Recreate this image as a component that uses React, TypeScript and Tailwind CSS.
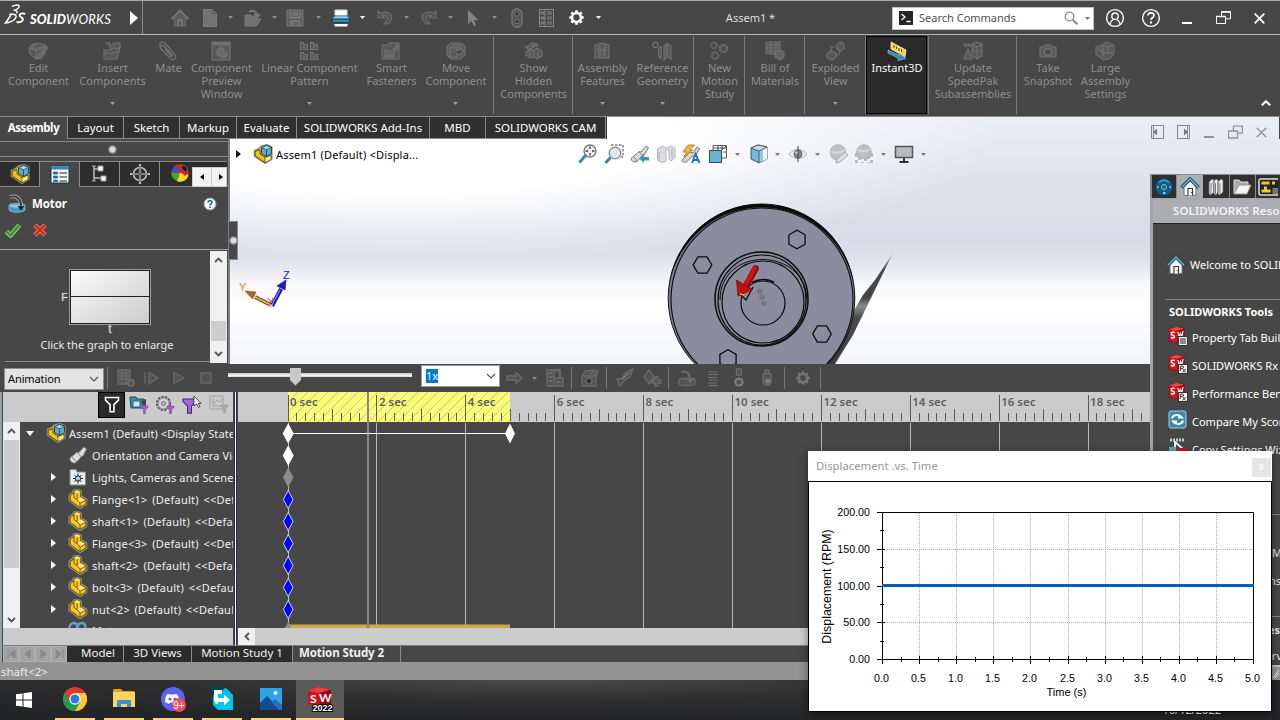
import React from "react";

type P = { className?: string };
const FONT = "font-['Noto_Sans','Open_Sans',sans-serif]";

const Svg = ({ w = 20, h = 20, vb, className = "", children }: { w?: number; h?: number; vb?: string; className?: string; children: React.ReactNode }) => (
  <svg width={w} height={h} viewBox={vb ?? "0 0 20 20"} className={"block shrink-0 " + className} fill="none">
    {children}
  </svg>
);

/* ---------- shared icons ---------- */
const Caret = ({ className = "" }: P) => (
  <Svg w={5} h={3} vb="0 0 5 3" className={className}><path d="M0 0H5L2.5 3Z" fill="currentColor" /></Svg>
);
const PartIcon = () => (
  <Svg>
    <path d="M1.5 6 5 3.5 6 1.5 10 .8 13 2.5V7l5.3 3.5v4.8L12 19.3 1.5 11.5Z" fill="#f7c524" stroke="#93917f" strokeWidth="2" />
    <path d="M2.2 6.2 6 4v-2l3.5-1 3.2 1.8V8l5.2 3v4L12 18.6 2.2 11.5Z" fill="#f7c524" stroke="#5e4603" strokeWidth=".9" />
    <path d="M6 2.2 9.4 1.2 12.5 3 9.2 4.3ZM9.4 10 12.7 8.2 17.6 11.2 12 14.2Z" fill="#ffe98a" />
    <path d="M6 4v4.5l3.3 2.2L12 14.2V18.5M9.2 4.3V10.5M12 14.2 17.8 11" stroke="#5e4603" strokeWidth=".8" />
  </Svg>
);
const AsmIcon = () => (
  <Svg>
    <path d="M1.5 6.5 5 5 8.5 2 14 .8 18.8 3v12L12 19.3 1.5 12Z" fill="#f7c524" stroke="#93917f" strokeWidth="1.6" />
    <path d="M2.2 7.5 7 5.5V10l5 3.2 6-2v4L12 18.6 2.2 11.8Z" fill="#f9c31b" stroke="#5e4603" strokeWidth=".9" />
    <path d="m8.5 3.8 5-2.4 5 2v6.2l-5 2.8-5-2.8Z" fill="#63a9ca" stroke="#123f58" strokeWidth=".9" />
    <path d="m8.5 3.8 5 2 5-2.4-5-2Z" fill="#a9d7ea" stroke="#123f58" strokeWidth=".7" />
    <path d="M13.5 5.8v6.4M12 13v5.5" stroke="#123f58" strokeWidth=".8" />
    <path d="M12.5 14.5 17.5 12v3.3l-5 2.7Z" fill="#fff08a" />
  </Svg>
);
const HouseIcon = () => (
  <Svg>
    <path d="M4 9v9.5h12V9l-6-5.5Z" fill="#f7f7f7" stroke="#777" />
    <path d="M8 18.5V11.5h4.5v7" stroke="#333" strokeWidth="1.1" fill="#fff" />
    <path d="M1.5 10.5 10 2l8.5 8.5" stroke="#123f58" strokeWidth="3.2" />
    <path d="M1.8 10.2 10 2l8.2 8.2" stroke="#6fc0de" strokeWidth="1.3" />
    <path d="M11.3 15v1" stroke="#333" />
  </Svg>
);
const SwIcon = ({ rx = false }: { rx?: boolean }) => (
  <Svg w={20} h={20}>
    <path d="M1 3.5 8 1l8 1.5v11.3L8 17 1 14.8Z" fill="#d9141c" stroke="#7b0a0e" strokeWidth=".7" />
    <path d="M1 3.5 9 4.8 16 2.5 8 1Z" fill="#f0494c" />
    <path d="M9 4.8 16 2.5v11.3L9 17Z" fill="#a50f15" />
    <path d="M6.8 6.7C4.8 5.5 2.8 6.4 3.2 8c.3 1.4 3.3 1.1 3.3 2.8 0 1.4-2.3 1.6-3.6.6" stroke="#fff" strokeWidth="1.4" />
    <path d="m10 6 1 5.5 1.5-4 1.2 3.5L15 5.2" stroke="#fff" strokeWidth="1.2" />
    <rect x="10.5" y="10.5" width="9" height="9" fill="#f4f4f4" stroke="#333" />
    {rx ? <path d="M12.3 17v-5h2c1.8 0 1.8 2.3 0 2.3h-2m2 0 3.3 4.2m0-3.6-3 3.6" stroke="#222" strokeWidth=".9" /> : <path d="M12 13h6M12 15h6M12 17h6" stroke="#222" />}
  </Svg>
);
const GearShape = ({ c, s = 18, sw = 2.4, className = "" }: { c: string; s?: number; sw?: number; className?: string }) => (
  <Svg w={s} h={s} className={className}>
    <circle cx="10" cy="10" r="5.2" stroke={c} strokeWidth={sw * 1.5} />
    <g stroke={c} strokeWidth="3.2">
      <path d="M10 1.5V5M10 15v3.5M1.5 10H5M15 10h3.5M4 4l2.4 2.4M13.6 13.6 16 16M16 4l-2.4 2.4M6.4 13.6 4 16" />
    </g>
  </Svg>
);

/* ---------- title bar ---------- */
const TG = "#6d6d6d";
function TitleBar() {
  return (
    <header className="flex h-[35px] shrink-0 border-y border-t-[#a7abab] border-b-[#b4b4b4] bg-[#474747]">
      <div className="flex w-[143px] items-center border-r border-[#8a8a8a] pl-[4px]">
        <Svg w={22} h={22} vb="0 0 22 22" className="-mt-[5px]">
          <path d="M8 2.5c4-2 8-2 7 .5-.7 1.700-3 2.800-5.500 3.400 3-.3 4.500.8 3 3" stroke="#fff" strokeWidth="1.4" />
          <path d="M8 9.500 1.500 19c5-.5 9.500-3 10.500-6 .7-2.500-2-3.300-7-2.500" stroke="#fff" strokeWidth="1.5" />
          <path d="M21.300 9.800c-3-.9-6-.2-5.500 1.900.5 1.700 3.400 2 3.100 4-.3 2-3.200 2.900-6.400 2.300" stroke="#fff" strokeWidth="1.9" />
        </Svg>
        <div className="ml-[4px] mt-[2px] flex w-[84px] items-baseline whitespace-nowrap font-['Lato','Noto_Sans',sans-serif] text-[13px] leading-[14px] text-white">
          <b className="font-black italic">SOLID</b><i className="tracking-[0.2px]">WORKS</i>
        </div>
        <Svg w={8} h={14} vb="0 0 8 14" className="ml-[16px]"><path d="M0 0 8 7 0 14Z" fill="#fff" /></Svg>
      </div>
      <div className="flex w-[480px] items-center pl-[27px] text-[#8f8f8f]">
        <Svg w={20} h={20}><path d="M10 2.5 2 11h2.5v7h11v-7H18Z" fill="#5d5d5d" stroke={TG} /><path d="m1.5 11 8.5-8.5L18.5 11" stroke="#7b7b7b" strokeWidth="1.6" /><path d="M8 18v-6h4v6" stroke="#888" /></Svg>
        <Svg w={14} h={18} vb="0 0 14 18" className="ml-[13px]"><path d="M.5.5h9l4 4v13H.5Z" fill="#727272" stroke="#7c7c7c" /><path d="M9.5.5v4h4" stroke="#555" /></Svg>
        <Caret className="ml-[11px]" />
        <Svg w={20} h={20} className="ml-[10px]"><path d="M2 18V7h6l1 2h5v2h4l-5 7Z" fill="#707070" stroke="#7c7c7c" /><path d="M6 4c5-3 8 0 8 4m-3-2 3 3 3-3" stroke="#7a7a7a" strokeWidth="2" /></Svg>
        <Caret className="ml-[9px]" />
        <Svg w={18} h={18} vb="0 0 18 18" className="ml-[9px]"><path d="M1 1h16v16H1Z" fill="#606060" stroke="#777" /><path d="M4 1.5v7h10v-7M5 17v-5h8v5M6 4h6M6 6h6M7 13v3" stroke="#858585" /></Svg>
        <Caret className="ml-[12px]" />
        <Svg w={20} h={20} className="ml-[10px]">
          <path d="M4 9V2h12v7" fill="#fff" stroke="#d9d9d9" /><path d="M1.5 9.5c0-1 1-1.5 2-1.5h13c1 0 2 .5 2 1.5V14h-17Z" fill="#4fb2d6" stroke="#0f4763" />
          <path d="M2 11.5h16" stroke="#12506e" strokeWidth="1.6" /><path d="M3 16h14l-1 2.5H4Z" fill="#fff" /><path d="M4 9h12" stroke="#bfe7f5" />
        </Svg>
        <Caret className="ml-[9px] text-white" />
        <Svg w={20} h={20} className="ml-[10px]"><path d="M3 3v7h7L7.500 7.500c4-1 6.500 1.500 4.500 4.500l-3 4h4c4-4 5.500-8 1.500-10.500C12 4 8.500 4 6 5.500Z" fill="#555" stroke={TG} strokeWidth="1.2" /></Svg>
        <Caret className="ml-[9px]" />
        <Svg w={20} h={20} className="ml-[10px] -scale-x-100"><path d="M3 3v7h7L7.500 7.500c4-1 6.500 1.500 4.500 4.500l-3 4h4c4-4 5.500-8 1.500-10.500C12 4 8.500 4 6 5.500Z" fill="#555" stroke={TG} strokeWidth="1.2" /></Svg>
        <Caret className="ml-[9px]" />
        <Svg w={12} h={18} vb="0 0 12 18" className="ml-[14px]"><path d="M1 1v14l3.5-3 2.5 5 2-1-2-5h4.500Z" fill="#828282" /></Svg>
        <Caret className="ml-[13px]" />
        <Svg w={12} h={20} vb="0 0 12 20" className="ml-[14px]"><rect x="1" y="1" width="10" height="18" rx="4.5" fill="#555" stroke="#777" strokeWidth="1.3" /><circle cx="6" cy="6" r="2.2" fill="#3b3b3b" stroke="#777" /><circle cx="6" cy="13.5" r="2.2" fill="#3b3b3b" stroke="#777" /></Svg>
        <Svg w={15} h={18} vb="0 0 15 18" className="ml-[16px]"><rect x=".5" y=".5" width="14" height="17" stroke="#898989" /><path d="M6 1v16M2 3h3v2H2ZM2 8h3v2H2ZM2 13h3v2H2ZM8 3h5M8 5h5M8 8h5M8 10h5M8 13h5M8 15h5" stroke="#898989" /></Svg>
        <GearShape c="#fff" s={17} className="ml-[14px]" sw={2} />
        <Caret className="ml-[11px] text-white" />
      </div>
      <div className="flex w-[253px] items-center justify-center pl-[2px] pt-px text-[11px] text-[#dedede]"><span>Assem1 *</span></div>
      <div className="flex items-center pl-[16px] pt-px">
        <div className="flex h-[23px] w-[202px] items-center border border-[#c2c2c2] bg-white pl-[6px]">
          <Svg w={14} h={14} vb="0 0 14 14"><path d="M0 0h14v14H0Z" fill="#262626" /><path d="m2.5 3 3.5 3L2.5 9M7.5 10.5h4" stroke="#fff" strokeWidth="1.3" /></Svg>
          <span className="ml-[6px] w-[146px] text-[11px] text-[#505050]">Search Commands</span>
          <Svg w={14} h={14} vb="0 0 14 14" className="-ml-[1px]"><circle cx="5.5" cy="5.5" r="4.3" stroke="#888" strokeWidth="1.3" /><path d="m8.8 8.8 4.5 4.5" stroke="#888" strokeWidth="2" /></Svg>
          <Caret className="ml-[7px] text-[#777]" />
        </div>
        <Svg w={20} h={20} className="ml-[11px]"><circle cx="10" cy="10" r="8.4" stroke="#fff" strokeWidth="1.4" /><circle cx="10" cy="8.2" r="3.2" stroke="#fff" strokeWidth="1.3" /><path d="M5 16c.3-2.5 1.8-3.8 3.2-4.5M15 16c-.3-2.5-1.8-3.8-3.2-4.5" stroke="#fff" strokeWidth="1.3" /></Svg>
        <Svg w={20} h={20} className="ml-[16px]"><circle cx="10" cy="10" r="8.4" stroke="#fff" strokeWidth="1.4" /><path d="M7 7.5C7 3.8 13 4 13 7.4c0 2.1-3 2.2-3 4.6" stroke="#fff" strokeWidth="1.8" /><path d="M9 13.5h2v2H9Z" fill="#fff" /></Svg>
        <Svg w={10} h={12} vb="0 0 10 12" className="ml-[21px]"><path d="M0 11h10" stroke="#fff" strokeWidth="2" /></Svg>
        <Svg w={15} h={14} vb="0 0 15 14" className="ml-[24px]"><path d="M.5 5.5h9v7h-9ZM5.5 5V.8h9v7H10" stroke="#fff" /><path d="M0 5.5h10M5 1h10" stroke="#fff" strokeWidth="1.6" /></Svg>
        <Svg w={11} h={11} vb="0 0 11 11" className="ml-[23px]"><path d="m.7.7 9.6 9.6M10.3.7.7 10.3" stroke="#fff" strokeWidth="1.7" /></Svg>
      </div>
    </header>
  );
}

/* ---------- ribbon ---------- */
const g1 = { stroke: "#727272", strokeWidth: 1.1, fill: "#585858" };
const ribbonIcons: Record<string, React.ReactNode> = {
  edit: <g {...g1}><path d="M1 7 5 3l5-1 7 2v8l-4 6-6-1-5-4Z" /><path d="M2 7l6 3 8-5M8 10v7M4 6l4-3M9 18l1-4 8-9 1.5 2-8 9.5Z" fill="#666" /></g>,
  insert: <g {...g1}><path d="M2 9h6l1-2h9l-3 11H2Z" /><path d="M3 2h5v5M9 5l3-3 6 0v4l-3 2-3-1M2 12h10l5-2" /></g>,
  mate: <g {...g1} fill="none" strokeWidth={1.4}><path d="M15 15 6 5c-2-2-5 1-3 3l10 10c3 2 6-1 4-4L7 2C4 0 1 2 2 5" /><path d="m7 8 7 8" /></g>,
  preview: <g {...g1}><path d="M1 1h18v18H1ZM1 4h18" /><path d="M1.5 2.5h17" stroke="#777" strokeWidth="2" /><path d="M6 9l4-3 3 2v3l3 1v3l-4 2-6-3Z" fill="#6a6a6a" /></g>,
  linear: <g {...g1}><path d="M1.5 1.5h3v2h4v5h-7ZM11.5 1.5h3v2h4v5h-7ZM1.5 11.5h3v2h4v5h-7ZM11.5 11.5h3v2h4v5h-7Z" /><path d="M4 6h2M14 6h2M4 16h2M14 16h2" stroke="#808080" /></g>,
  smart: <g {...g1}><path d="M1 4h6l1-2h10v16H1Z" /><path d="M4 8v8h9v-6M8 13l8-9 2 2-8 8-3 1Z" fill="#666" /></g>,
  move: <g {...g1}><path d="M1 6 5 2h10l4 3v9l-5 4H5l-4-4Z" /><path d="M4 7h7v9H4ZM4 7l4-3h7l-3 3" /><path d="M8 12c1-2 3-3 6-3V7l4 3.5-4 3V12" fill="#474747" /></g>,
  show: <g {...g1}><path d="M5 6c2-5 7-5 10-2l-2 1C11 3.5 9 4 8.5 6H11l-5 3-4-4Z" /><path d="M3 11l4-3 3 2 4-3 5 3v5l-5 3-3-2-4 1-4-3Z" /><path d="M7 10v6M11 11v6M15 10v6" /></g>,
  feat: <g {...g1}><path d="M3 4l7-2 7 2v13h-4v-8H7v8H3Z" /><path d="M7 4v5M13 4v5M3 8h4M8 9h4v8H8Z" /></g>,
  ref: <g {...g1} fill="none"><circle cx="3.5" cy="4" r="2.6" /><path d="M6.5 7.5 9 5.5v12l-2.5-2ZM12 5l2-2v14l-2 2ZM15.5 3 19 5v13l-3.5-2Z" fill="#555" /></g>,
  study: <g stroke="#6d6d6d" fill="none" strokeWidth="2"><circle cx="5" cy="4.5" r="2.8" strokeDasharray="1.6 .7" /><circle cx="14.5" cy="7.5" r="3.6" strokeDasharray="2.2 .6" strokeWidth="2.5" /><circle cx="6" cy="14.5" r="3.2" strokeDasharray="2 .7" /></g>,
  bom: <g {...g1}><path d="M1 1h14v12H1ZM1 4h14M1 7h14M1 10h14M6 1v12M11 1v12" /><path d="M10 11l5-2 4 2v5l-4 3-5-3Z" fill="#646464" /></g>,
  explode: <g {...g1}><path d="M2 13l4-3 5 2v4l-4 3-5-2ZM12 3l4-2 3 2v5l-4 2-3-2Z" /><path d="M10 14c3 0 5 0 5-5M6 10V6h4" fill="none" /></g>,
  instant: <g><path d="m4 1 15 8-1 7L4 8Z" fill="#fbd54a" stroke="#e9e9e9" strokeWidth=".8" /><path d="M7 4v3M9.5 5.5v2.5M12 7v3M14.5 8.2v3" stroke="#333" strokeWidth=".9" /><path d="m1 9 11 5.5V12l7 5.5-8 2V17L1 12Z" fill="#2b8fc0" stroke="#c9d8df" strokeWidth=".5" /></g>,
  update: <g {...g1}><path d="M9 3l5-2 5 2v12l-5 3-5-3ZM9 3l5 3 5-3M14 6v12M9 9l5 2 5-2" /><path d="M1 3h6v2H1ZM5 8l4 10H1Z" /></g>,
  snap: <g {...g1}><path d="M2 6h3l2-2h6l2 2h3v10H2Z" /><circle cx="10" cy="11" r="3.6" strokeWidth="1.8" fill="#474747" /></g>,
  large: <g {...g1}><path d="M1 6l6-2 5-3 7 3v9l-5 5-6 1-7-6Z" /><path d="M8 4l5 2 5-2M13 6v6M8 5v6l5 2 5-2M3 8l5 3v5" /></g>,
};
type Rb = { w: string; icon: string; lines: string[]; arrow?: boolean; sep?: boolean; on?: boolean };
const ribbon: Rb[] = [
  { w: "w-[76px]", icon: "edit", lines: ["Edit", "Component"] },
  { w: "w-[72px]", icon: "insert", lines: ["Insert", "Components"], arrow: true },
  { w: "w-[40px]", icon: "mate", lines: ["Mate"] },
  { w: "w-[66px]", icon: "preview", lines: ["Component", "Preview", "Window"] },
  { w: "w-[110px]", icon: "linear", lines: ["Linear Component", "Pattern"], arrow: true },
  { w: "w-[54px]", icon: "smart", lines: ["Smart", "Fasteners"] },
  { w: "w-[76px]", icon: "move", lines: ["Move", "Component"], arrow: true, sep: true },
  { w: "w-[79px]", icon: "show", lines: ["Show", "Hidden", "Components"], sep: true },
  { w: "w-[58px]", icon: "feat", lines: ["Assembly", "Features"], arrow: true },
  { w: "w-[63px]", icon: "ref", lines: ["Reference", "Geometry"], arrow: true, sep: true },
  { w: "w-[51px]", icon: "study", lines: ["New", "Motion", "Study"], sep: true },
  { w: "w-[60px]", icon: "bom", lines: ["Bill of", "Materials"], sep: true },
  { w: "w-[61px]", icon: "explode", lines: ["Exploded", "View"], arrow: true, sep: true },
  { w: "w-[63px]", icon: "instant", lines: ["Instant3D"], on: true, sep: true },
  { w: "w-[88px]", icon: "update", lines: ["Update", "SpeedPak", "Subassemblies"], sep: true },
  { w: "w-[61px]", icon: "snap", lines: ["Take", "Snapshot"] },
  { w: "w-[54px]", icon: "large", lines: ["Large", "Assembly", "Settings"] },
];
function Ribbon() {
  return (
    <section className="flex h-[82px] shrink-0 border-b border-[#8b8b8b] bg-[#474747] pt-px">
      {ribbon.map((r, i) => (
        <div key={i} className={`${r.w} flex h-[78px] shrink-0 ${r.sep ? "border-r border-[#7c7c7c]" : ""}`}>
          <div className={`flex flex-1 flex-col items-center ${r.on ? "mr-px border border-black bg-[#2a2a2a] pt-[4px] text-white" : "pt-[5px] text-[#8e8e8e]"}`}>
            <Svg>{ribbonIcons[r.icon]}</Svg>
            <div className="flex h-[41px] flex-col items-center whitespace-nowrap pl-px text-[11px] leading-[13px]">
              {r.lines.map((l) => <span key={l}>{l}</span>)}
            </div>
            {r.arrow && <Caret className="text-[#a0a0a0]" />}
          </div>
        </div>
      ))}
      <div className="flex flex-1 items-end justify-end pb-[10px] pr-[9px]">
        <Svg w={10} h={6} vb="0 0 10 6"><path d="m.8 5.2 4.2-4 4.2 4" stroke="#fff" strokeWidth="2" /></Svg>
      </div>
    </section>
  );
}

/* ---------- command tabs ---------- */
const cmdTabs: [string, string][] = [
  ["Assembly", "w-[68px]"], ["Layout", "w-[56px]"], ["Sketch", "w-[56px]"], ["Markup", "w-[57px]"],
  ["Evaluate", "w-[60px]"], ["SOLIDWORKS Add-Ins", "w-[133px]"], ["MBD", "w-[56px]"], ["SOLIDWORKS CAM", "w-[120px]"],
];
const CommandTabs = () => (
  <nav className="flex h-[22px] w-[607px] shrink-0 text-[11.5px] text-white">
    {cmdTabs.map(([t, w], i) => (
      <div key={t} className={`${w} flex shrink-0 items-center justify-center whitespace-nowrap border-r border-[#8b8b8b] ${i === 0 ? "bg-[#474747] font-bold tracking-[-0.4px]" : "border-b bg-[#303030]"}`}>{t}</div>
    ))}
    <div className="w-px bg-[#303030]" />
  </nav>
);

/* ---------- property panel ---------- */
const Dot = () => <Svg w={9} h={9} vb="0 0 9 9"><circle cx="4.5" cy="4.5" r="3.6" fill="#dcdcdc" stroke="#8e8e8e" strokeWidth="1.4" /></Svg>;

function MotorPanel() {
  return (
    <aside className="flex w-[230px] shrink-0 flex-col border-r-2 border-[#808080] bg-[#474747]">
      <div className="mt-[2px] flex h-[16px] items-center justify-center border-y border-[#8a8a8a] pr-[3px]"><Dot /></div>
      <div className="mt-[4px] flex h-[26px] w-[227px] overflow-hidden">
        <div className="flex w-[40px] items-center justify-center border border-l-0 border-[#8b8b8b] bg-[#2d2d2d]"><AsmIcon /></div>
        <div className="flex w-[39px] items-center justify-center border-t border-[#8b8b8b]">
          <Svg><path d="M1 1h18v17H1Z" fill="#f4f7f8" stroke="#15384a" /><path d="M1 3h18" stroke="#2f86b0" strokeWidth="3" /><path d="M3.5 7h4v2h-4ZM3.5 11h4v2h-4ZM3.5 15h4v1.5h-4Z" fill="#2b7ba0" stroke="#184a63" strokeWidth=".6" /><path d="M9.5 8H17M9.5 12H17M9.5 16H17" stroke="#222" strokeWidth="1.1" /></Svg>
        </div>
        <div className="flex w-[41px] items-center justify-center border border-[#8b8b8b] bg-[#2d2d2d]">
          <Svg><path d="M4 2v15M4 5h5M4 14h7" stroke="#bbb" strokeWidth="1.5" /><path d="M8 2h5v5H8ZM11 12h5v5h-5Z" fill="#fff" stroke="#999" /><path d="M2 2h4M2 17h4" stroke="#bbb" strokeDasharray="2 1" /></Svg>
        </div>
        <div className="flex w-[40px] items-center justify-center border border-l-0 border-[#8b8b8b] bg-[#2d2d2d]">
          <Svg><circle cx="10" cy="10" r="6.5" stroke="#bdbdbd" strokeWidth="1.6" /><path d="M10 0v20M0 10h20" stroke="#bdbdbd" strokeWidth="2.2" /><path d="M10 2v16M2 10h16" stroke="#333" strokeWidth=".8" /></Svg>
        </div>
        <div className="flex flex-1 items-end border-b border-t border-[#8b8b8b] bg-[#2d2d2d] pl-[10px]">
          <Svg w={20} h={20} className="mb-[3px]">
            <circle cx="10" cy="10" r="8.6" fill="#e6281e" /><path d="M10 10 1.5 9a8.6 8.6 0 0 1 5-7Z" fill="#2b56d8" /><path d="M10 10 1.4 10a8.6 8.6 0 0 0 6 8Z" fill="#45a52c" /><path d="M10 10 7 18.2a8.6 8.6 0 0 0 11.5-6.5Z" fill="#f5d92f" /><path d="M4 3c2-2 7-2.5 9-1l5 8-3 3-5-5Z" fill="#d81f26" /><path d="M11 3c3-2 8 2 6 6-3 0-6-3-6-6Z" fill="#1c1c1c" stroke="#999" strokeWidth=".5" />
          </Svg>
          <div className="-mb-px ml-[2px] flex h-[20px] w-[35px] shrink-0 border border-[#cfcfcf] bg-[#f3f3f3]">
            <div className="flex w-[19px] items-center justify-center border-r border-[#c7c7c7]"><Svg w={4} h={6} vb="0 0 4 6"><path d="M4 0v6L0 3Z" fill="#000" /></Svg></div>
            <div className="flex flex-1 items-center justify-end pr-[3px]"><Svg w={4} h={6} vb="0 0 4 6"><path d="M0 0v6l4-3Z" fill="#000" /></Svg></div>
          </div>
        </div>
      </div>
      <div className="mt-[6px] flex h-[22px] items-center pl-[7px]">
        <Svg><path d="M2 11c0-2 14-2 16 0v5c-2 3-14 3-16 0Z" fill="#3c9cc4" stroke="#8dbfd2" strokeWidth=".8" /><ellipse cx="9" cy="12" rx="6" ry="1.6" fill="#8ccfe6" /><path d="M3 3c7-2 11 2 11 9" stroke="#a5a5a5" strokeWidth="3.8" /><path d="M3 3c7-2 11 2 11 9" stroke="#333" strokeWidth="1.8" /><path d="M10.5 12h7L14 17Z" fill="#111" stroke="#999" strokeWidth=".5" /></Svg>
        <span className="ml-[5px] flex-1 text-[11.5px] font-bold tracking-[-0.1px] text-white">Motor</span>
        <Svg w={14} h={14} vb="0 0 14 14" className="mr-[11px]"><circle cx="7" cy="7" r="6" fill="#fff" stroke="#999" /><path d="M5 5.5C5 2.8 9 3 9 5.3 9 6.8 7 6.8 7 8.5M7 9.6v1.5" stroke="#1877a8" strokeWidth="1.7" /></Svg>
      </div>
      <div className="mt-[5px] flex h-[20px] items-center pl-[5px]">
        <Svg w={16} h={15} vb="0 0 16 15"><path d="m1.5 8.5 4 4L14.5 2" stroke="#b9c9ae" strokeWidth="4.5" /><path d="m1.5 8.5 4 4L14.5 2" stroke="#35a01c" strokeWidth="2.8" /></Svg>
        <Svg w={14} h={14} vb="0 0 14 14" className="ml-[12px]"><path d="m2 2 10 10M12 2 2 12" stroke="#d3a79d" strokeWidth="4.2" /><path d="m2 2 10 10M12 2 2 12" stroke="#e3260b" strokeWidth="2.8" /></Svg>
      </div>
      <div className="mt-[9px] flex flex-1 border-t border-[#a1a1a1] pt-px">
        <div className="flex w-[210px] flex-col items-center pl-[5px]">
          <div className="mt-[18px] flex items-center">
            <span className="mr-px font-['Liberation_Sans'] text-[11px] text-[#ddd] [text-shadow:0_0_2px_#999]">F</span>
            <div className="mr-[3px] h-[56px] w-[82px] border border-[#9b9b9b] bg-[#222] p-px">
              <div className="flex h-full flex-col bg-linear-to-br from-[#fafbfa] to-[#cbcccb]"><div className="h-[26px] border-b border-[#222]" /></div>
            </div>
          </div>
          <span className="-mt-[2px] ml-[5px] h-[14px] font-['Liberation_Sans'] text-[12px] leading-[13px] text-[#ddd] [text-shadow:0_0_2px_#999]">t</span>
          <span className="-ml-px whitespace-nowrap text-[11px] leading-[16px] text-[#e9e9e9]">Click the graph to enlarge</span>
          <div className="mb-[2px] mt-auto h-px w-[205px] bg-[#929292]" />
        </div>
        <div className="flex h-[112px] w-[17px] flex-col items-center bg-[#f0f0f0] py-[6px]">
          <Svg w={9} h={6} vb="0 0 9 6"><path d="m1 5 3.5-3.5L8 5" stroke="#555" strokeWidth="1.8" /></Svg>
          <div className="mt-[58px] h-[20px] w-[15px] bg-[#cdcdcd]" />
          <Svg w={9} h={6} vb="0 0 9 6" className="mt-auto"><path d="m1 1 3.5 3.5L8 1" stroke="#555" strokeWidth="1.8" /></Svg>
        </div>
      </div>
    </aside>
  );
}

/* ---------- model view ---------- */
const hex = (cx: number, cy: number, r: number, a: number) =>
  Array.from({ length: 6 }, (_, i) => { const t = ((i * 60 + a) * Math.PI) / 180; return `${(cx + r * Math.cos(t)).toFixed(1)},${(cy + r * Math.sin(t)).toFixed(1)}`; }).join(" ");

const Model = () => (
  <svg className="absolute inset-0" width="1280" height="247" viewBox="0 117 1280 247" fill="none">
    <defs>
      <linearGradient id="edge" x1="0" y1="1" x2="0" y2="0"><stop offset="0" stopColor="#3b3b3b" /><stop offset=".42" stopColor="#4c4c4c" /><stop offset=".52" stopColor="#8c8c8c" /><stop offset=".6" stopColor="#444" /><stop offset=".85" stopColor="#4a4a4a" /><stop offset="1" stopColor="#c5c8d2" /></linearGradient>
    </defs>
    <path d="M893 253 875 280l-12 15-13 22-26 47h11l18-29 15-31Z" fill="url(#edge)" />
    <ellipse cx="761.5" cy="298" rx="93.3" ry="94" fill="#7d7e90" stroke="#111" strokeWidth="1" />
    <ellipse cx="762" cy="299.5" rx="91" ry="91.5" fill="#8b8ca0" stroke="#0b0b0b" strokeWidth="1.1" />
    <path d="M670 279.6A93.3 94 0 0 1 853 279.6V281A93.85 94.5 0 0 0 670 281Z" fill="#0a0a0a" />
    <ellipse cx="761.5" cy="299" rx="46.5" ry="47" stroke="#0b0b0b" strokeWidth="1.5" />
    <ellipse cx="762" cy="300" rx="44" ry="45" stroke="#0b0b0b" strokeWidth="1.2" />
    <path d="M720 300c0-54 85-54 87 0" stroke="#0b0b0b" />
    <circle cx="763" cy="302" r="41" stroke="#0b0b0b" strokeWidth="1.2" />
    <circle cx="763" cy="303" r="22" stroke="#0b0b0b" strokeWidth="1.2" />
    <path d="M752 282.5c7-4 16-4 22 0" stroke="#0b0b0b" strokeWidth="1.6" />
    <path d="m741 295 5 5 7-13" stroke="#0b0b0b" strokeWidth="1.3" />
    <g stroke="#0b0b0b" strokeWidth="1.3">
      <polygon points={hex(797, 239.5, 9.3, 30)} /><polygon points={hex(702.5, 265, 9.3, 0)} /><polygon points={hex(822, 334, 9.3, 0)} /><polygon points={hex(728, 359, 9.3, 30)} />
    </g>
    <g fill="#77777a"><circle cx="760" cy="291.5" r="2.8" /><circle cx="762" cy="297.5" r="2.8" /><circle cx="764" cy="303.5" r="2.8" /></g>
    <path d="M755.5 268.5 746 286" stroke="#8d0808" strokeWidth="6.6" strokeLinecap="round" /><path d="M755 268 745.5 285.5" stroke="#cc1414" strokeWidth="4" strokeLinecap="round" />
    <path d="m736.5 280 16 9.5-14.5 6.5Z" fill="#c31010" stroke="#7c0606" strokeWidth=".8" /><path d="m740 294 4 1" stroke="#e6b51c" strokeWidth="1.5" />
    {/* orientation triad */}
    <path d="m271 305-16-8" stroke="#7e4a12" strokeWidth="4" /><path d="m271 305-16-8" stroke="#e7b978" strokeWidth="1.4" /><path d="m245 291 11 1-3.5 7Z" fill="#b5651b" stroke="#7e4a12" strokeWidth=".6" />
    <path d="m272 306 9-17" stroke="#1515a8" strokeWidth="4" /><path d="m272 305 8-15" stroke="#8686f2" strokeWidth="1.3" /><path d="m286 280-9 6 8 4Z" fill="#1b1bc4" stroke="#0d0d88" strokeWidth=".6" />
    <path d="m268 298 3 4 2-4M271 302l-2 3" stroke="#f02020" strokeWidth=".9" /><circle cx="271" cy="306" r="1.8" fill="#ffb8b8" />
    <text x="283" y="279" className="fill-[#1010ee] font-['Liberation_Sans'] text-[11px]">Z</text>
    <text x="239" y="291" className="fill-[#e08216] font-['Liberation_Sans'] text-[11px]">Y</text>
  </svg>
);

const hud: { ml: string; n: React.ReactNode; caret?: string }[] = [
  { ml: "-ml-px", n: <><circle cx="12" cy="7" r="6" fill="#eef1f2" stroke="#777" strokeWidth="1.3" /><path d="m7.5 11.5-6 7" stroke="#3f85a8" strokeWidth="3" /><path d="M12 2.5v2.5M12 9v2.5M7.5 7H10M14 7h2.5" stroke="#333" strokeWidth="1.3" /></> },
  { ml: "ml-[6px]", n: <><path d="M7 1h12v12h-5" stroke="#444" strokeDasharray="2.5 1.5" /><circle cx="11" cy="9" r="5.8" fill="#dfe9ec" stroke="#888" strokeWidth="1.3" /><path d="m6.5 13.5-5 5.5" stroke="#3f85a8" strokeWidth="3" /></> },
  { ml: "ml-[6px]", n: <><path d="M1.5 14 7 9.5l2-2 2 .5 5-6 2.5 1.5-4 7-2 .5-1.5 2.5-5 4.5c-3 0-5-1-4.5-4Z" fill="#dadada" stroke="#777" /><path d="m4 13 3 4M9 8l4 3.5" stroke="#888" /><path d="m9 14.5 5-4V13h5v3.5h-5V19Z" fill="#3f93bd" /></> },
  { ml: "ml-[6px]", n: <><path d="M1.5 5 6 2l4 2v13l-4 1.5-4.5-2ZM11 4l4-2 4 2v10l-4 3-2-2V8Z" fill="#dcdde0" stroke="#b5b6ba" /><path d="M3 8v7M16 5v9" stroke="#c5c5c8" strokeWidth="2" /></> },
  { ml: "ml-[5px]", n: <><path d="m1 16 8-8 3 1 4-6 2.5 1.5-4 7-3 .5-6 6c-3 .5-5 0-4.5-2Z" fill="#d5d5d5" stroke="#777" /><path d="M7 1 2 8h3.5L3 13l9-7H8.5l5-5Z" fill="#f5b73a" stroke="#9a6611" strokeWidth=".7" /><path d="m11 19 3.5-9 4 9M12.5 16h4.5" stroke="#2474a0" strokeWidth="1.9" /></> },
  { ml: "ml-[7px]", n: <><path d="M5 6V1.5h13.5V14H14M10 1v5M14 1v5M5 4h13M18 8h-3M14 6l4-4" stroke="#333" strokeWidth=".8" /><path d="M1.5 6.5h12v12h-12Z" fill="#6fb1cf" stroke="#1f4e66" /></>, caret: "ml-[7px]" },
  { ml: "ml-[9px]", n: <><path d="m2 4 7-3 9 2v12l-8 4-8-4Z" fill="#71bad8" stroke="#444" strokeWidth=".9" /><path d="m10 7 4-1.5v11.5l-4 2Z" fill="#8fcbe2" /><path d="m14 5.2 4-1.8v11.6l-4 2Z" fill="#f1f5f6" /><path d="m2 4 8 3 8-4-9-2Z" fill="#c2e1ec" stroke="#444" strokeWidth=".8" /><path d="M10 7v12" stroke="#444" strokeWidth=".8" /></>, caret: "ml-[6px]" },
  { ml: "ml-[8px]", n: <><path d="M1 10c5-6 13-6 18 0-5 6-13 6-18 0Z" fill="#ededed" stroke="#b5b5b5" /><circle cx="10" cy="10" r="4" fill="#858585" stroke="#6a6a6a" /><path d="M10 2v16" stroke="#333" strokeWidth=".9" /><circle cx="8.5" cy="8.5" r="1.2" fill="#ddd" /></>, caret: "ml-[7px]" },
  { ml: "ml-[9px]", n: <><circle cx="9" cy="8.5" r="7.8" fill="#bfc0c4" stroke="#b1b2b6" /><path d="M2 7c4 3 10 2 14-1" stroke="#d6d6d9" strokeWidth="2.5" /><path d="m7 19 1-4 8-7 3 3-8 7Z" fill="#dedfe2" stroke="#a7a7ab" /></> },
  { ml: "ml-[5px]", n: <><path d="M1 9h18v10H1Z" fill="#bbbcc0" /><circle cx="10" cy="8" r="7.2" fill="#bfc0c5" stroke="#aeafb3" /><path d="M4 6c4 2 8 2 12-1" stroke="#d6d6d9" strokeWidth="2" /><path d="M1 13h3v3H1ZM7 15h3v3H7ZM13 15h3v3h-3ZM4 16h3v3H4ZM16 13h3v3h-3ZM10 17h3v2h-3Z" fill="#f5f5f6" /></>, caret: "ml-[7px]" },
  { ml: "ml-[8px]", n: <><path d="M1.5 2.5h17v11h-17Z" fill="#b4bcc0" stroke="#555" strokeWidth="1.5" /><path d="M10 14v3M5.5 18h9" stroke="#333" strokeWidth="2" /></>, caret: "ml-[7px]" },
];
function Viewport() {
  return (
    <div className="relative z-10 flex flex-1 items-start pl-[6px] pt-[5px]">
      <div className="flex h-[20px] w-[343px] items-center">
        <Svg w={5} h={8} vb="0 0 5 8"><path d="M0 0v8l5-4Z" fill="#111" /></Svg>
        <div className="ml-[12px]"><AsmIcon /></div>
        <span className="ml-[3px] whitespace-nowrap pt-px text-[11px] leading-[18px] tracking-[0.18px] text-black">Assem1 (Default) &lt;Displa...</span>
      </div>
      <div className="flex h-[20px] items-center text-[#77787c]">
        {hud.map((h, i) => <React.Fragment key={i}><Svg className={h.ml}>{h.n}</Svg>{h.caret && <Caret className={h.caret} />}</React.Fragment>)}
      </div>
    </div>
  );
}
const WindowButtons = () => (
  <div className="flex h-[22px] flex-1 items-center justify-end border-r border-[#474747] pr-[12px] pt-[8px]">
    <Svg w={13} h={14} vb="0 0 13 14"><path d="M.5.5h12v13H.5ZM2.5 1v12" stroke="#85868a" /><path d="M6 3.5v7L2 7Z" fill="#77787c" /></Svg>
    <Svg w={13} h={14} vb="0 0 13 14" className="ml-[13px]"><path d="M.5.5h12v13H.5ZM10.5 1v12" stroke="#85868a" /><path d="M7 3.5v7L11 7Z" fill="#77787c" /></Svg>
    <Svg w={10} h={12} vb="0 0 10 12" className="ml-[14px]"><path d="M0 11h10" stroke="#919296" strokeWidth="2" /></Svg>
    <Svg w={15} h={14} vb="0 0 15 14" className="ml-[14px]"><path d="M.5 6h9v7h-9ZM5.5 5.5V1.2h9v7H10" stroke="#919296" strokeWidth="1.3" /></Svg>
    <Svg w={11} h={11} vb="0 0 11 11" className="ml-[13px]"><path d="m.7.7 9.6 9.6M10.3.7.7 10.3" stroke="#919296" strokeWidth="1.4" /></Svg>
  </div>
);

/* ---------- motion study ---------- */
const mi = { stroke: "#6b6b6b", strokeWidth: 1.3, fill: "#535353" };
const Bar = ({ ml }: { ml: string }) => <div className={`${ml} h-[22px] w-px shrink-0 bg-[#757575]`} />;
function MotionToolbar() {
  return (
    <div className="flex h-[28px] shrink-0 items-center bg-[#474747] pl-[4px]">
      <div className="mt-[2px] flex h-[22px] w-[100px] items-center border border-[#8e8e8e] bg-[#e3e3e3] pl-[3px] text-[11px] text-black">
        <span className="flex-1 tracking-[-0.1px]">Animation</span>
        <Svg w={10} h={6} vb="0 0 10 6" className="mr-[4px]"><path d="m1 1 4 4 4-4" stroke="#555" strokeWidth="1.2" /></Svg>
      </div>
      <Bar ml="ml-[3px]" />
      <Svg className="ml-[8px]"><g {...mi}><path d="M2 2h12v14H2ZM2 5h12M2 8h12M2 11h12M6 2v14M10 2v14" /><circle cx="15" cy="15" r="3" strokeWidth="2" /></g></Svg>
      <Svg w={18} h={16} vb="0 0 18 16" className="ml-[7px]"><path d="M2 2v12M6 2.5v11L15 8Z" {...mi} /></Svg>
      <Svg w={14} h={16} vb="0 0 14 16" className="ml-[11px]"><path d="M2 2.5v11L12 8Z" {...mi} /></Svg>
      <Svg w={14} h={14} vb="0 0 14 14" className="ml-[13px]"><path d="M2 2h10v10H2Z" {...mi} /></Svg>
      <div className="ml-[15px] flex h-[22px] w-[184px] items-start">
        <Svg w={184} h={22} vb="0 0 184 22"><path d="M0 8h184" stroke="#cfcfcf" strokeWidth="4" /><path d="M0 8.5h184" stroke="#f2f2f2" strokeWidth="2" /><path d="M62 1h11v12l-5.5 5.5L62 13Z" fill="#c9c9c9" /></Svg>
      </div>
      <div className="mb-[4px] ml-[9px] flex h-[22px] w-[79px] items-center border border-[#9a9a9a] bg-white pl-[4px] text-[11px]">
        <span className="bg-[#0078d7] leading-[14px] text-white">1x</span>
        <Svg w={10} h={6} vb="0 0 10 6" className="ml-auto mr-[3px]"><path d="m1 1 4 4 4-4" stroke="#555" strokeWidth="1.2" /></Svg>
      </div>
      <Svg w={18} h={16} vb="0 0 18 16" className="ml-[6px]"><path d="M1 6h9V2.5L16 8l-6 5.5V10H1Z" {...mi} /></Svg>
      <Caret className="ml-[8px] text-[#8a8a8a]" />
      <Svg className="ml-[8px]"><g {...mi}><path d="M2 2h7v16H2ZM9 10h9v8H9Z" /><path d="M3.5 5h4M3.5 9h4M3.5 13h4M9 2h6v8M11 14h5" stroke="#777" /></g></Svg>
      <Bar ml="ml-[6px]" />
      <Svg className="ml-[7px]"><g {...mi}><path d="M3 8h14v10H3ZM3 8l3-5 8-1 4 6" /><circle cx="10" cy="13" r="3" fill="#333" /><path d="m11 6 6-4 2 2-5 4" /></g></Svg>
      <Bar ml="ml-[7px]" />
      <Svg className="ml-[8px]"><g {...mi}><path d="M2 11h5l3-6 8-4-3 8-5 3-5 6Z" /><path d="m7 11 7-6" stroke="#808080" /></g></Svg>
      <Svg className="ml-[7px]"><g {...mi}><path d="m7 2 5 7-5 7-5-7ZM13 9h3v3h3v3h-3v3h-3v-3h-3v-3h3Z" /></g></Svg>
      <Bar ml="ml-[6px]" />
      <Svg className="ml-[8px]"><g {...mi}><path d="M2 12c0-2 16-2 16 0v4c0 2-16 2-16 0Z" /><path d="M4 4c7-2 9 2 9 8m-3-2 3 4 4-4" fill="none" strokeWidth="2" /></g></Svg>
      <Svg w={14} h={18} vb="0 0 14 18" className="ml-[9px]"><path d="M2 3h9M3 5.5h9M2 8.5h9M3 11h9M2 14h9M3 16.5h9" stroke="#737373" strokeWidth="1.2" /></Svg>
      <Svg w={14} h={20} vb="0 0 14 20" className="ml-[12px]"><g {...mi}><path d="M4.5 1h5v6h-5Z" /><circle cx="7" cy="14" r="3.6" stroke="#808080" strokeWidth="2" /></g></Svg>
      <Svg w={12} h={20} vb="0 0 12 20" className="ml-[15px]"><g {...mi}><path d="M2 6h8v8l-2 3H4l-2-3ZM4 2h4v4H4Z" /><path d="M4 11h5v4H4Z" fill="#888" /></g></Svg>
      <Bar ml="ml-[11px]" />
      <GearShape c="#737373" s={16} className="ml-[10px]" />
      <Bar ml="ml-[9px]" />
    </div>
  );
}

type Row = { label: string; kind: "asm" | "cam" | "light" | "part" };
const rows: Row[] = [
  { label: "Assem1 (Default) <Display State-1>", kind: "asm" },
  { label: "Orientation and Camera Views", kind: "cam" },
  { label: "Lights, Cameras and Scene", kind: "light" },
  { label: "Flange<1> (Default) <<Default>", kind: "part" },
  { label: "shaft<1> (Default) <<Default>", kind: "part" },
  { label: "Flange<3> (Default) <<Default>", kind: "part" },
  { label: "shaft<2> (Default) <<Default>", kind: "part" },
  { label: "bolt<3> (Default) <<Default>", kind: "part" },
  { label: "nut<2> (Default) <<Default>", kind: "part" },
];
const labelGap = { asm: "ml-[3px] tracking-[0.08px]", cam: "ml-[4px] tracking-[0.12px]", light: "ml-[4px] tracking-[0.12px]", part: "ml-[4px] tracking-[0.25px] [word-spacing:1.5px]" };
const Funnel = ({ c, o, s = 10 }: { c: string; o: string; s?: number }) => <g transform={`scale(${s / 10})`}><path d="M0 0h10v2L6.5 5.5V11h-3V5.5L0 2Z" fill={c} stroke={o} strokeWidth=".8" /></g>;

function Tree() {
  return (
    <div className="flex w-[230px] shrink-0 flex-col overflow-hidden">
      <div className="flex h-[30px] shrink-0 items-start bg-[#cbcbcb] pl-[95px]">
        <div className="flex h-[26px] w-[27px] items-center justify-center border border-black bg-[#2a2a2a]"><Svg w={16} h={18} vb="-1.5 -1.5 16 18"><g transform="scale(1.3)"><path d="M0 0h10v2L6.5 5.5V11h-3V5.5L0 2Z" fill="none" stroke="#fff" strokeWidth="1.2" /></g></Svg></div>
        <Svg className="ml-[4px] mt-[3px]"><path d="M1 2h6l1 2h7v9H2Z" fill="#3d8cb0" stroke="#184a63" /><path d="M4 6h7v6H4Z" fill="#c9e5ef" stroke="#184a63" strokeWidth=".8" /><path d="M12 6l5-2v7l-3-1" fill="#444" /><g transform="translate(12 11)"><Funnel c="#a25abf" o="#8c4aa8" s={7} /></g></Svg>
        <Svg className="ml-[6px] mt-[3px]"><circle cx="8.5" cy="8.5" r="6.8" stroke="#555" strokeWidth="1.6" strokeDasharray="2.6 1.1" /><circle cx="8.5" cy="8.5" r="5.6" fill="#cfcfcf" stroke="#777" /><circle cx="8.5" cy="8.5" r="1.8" stroke="#555" /><g transform="translate(12 11)"><Funnel c="#a25abf" o="#8c4aa8" s={7} /></g></Svg>
        <Svg className="ml-[7px] mt-[3px]"><g transform="translate(1 4)"><Funnel c="#a568d8" o="#4d1980" s={13} /></g><path d="M12 1v10l2.5-2 2 3.5 1.5-1-2-3h3Z" fill="#fff" stroke="#222" strokeWidth=".8" /></Svg>
        <Svg className="ml-[7px] mt-[3px]"><path d="M1 1h13v13H1ZM4 3v8h8M5 9l3-4 3 2 2-2" stroke="#a2a2a2" /><g transform="translate(12 10)"><Funnel c="#aaa" o="#999" s={7} /></g></Svg>
      </div>
      <div className="flex h-[206px] shrink-0 overflow-hidden">
        <div className="flex w-[17px] shrink-0 flex-col items-center bg-[#f0f0f0]">
          <Svg w={9} h={6} vb="0 0 9 6" className="my-[6px]"><path d="m1 5 3.5-3.5L8 5" stroke="#555" strokeWidth="1.8" /></Svg>
          <div className="h-[128px] w-[15px] shrink-0 bg-[#cdcdcd]" />
          <Svg w={9} h={6} vb="0 0 9 6" className="mb-[5px] mt-auto"><path d="m1 1 3.5 3.5L8 1" stroke="#555" strokeWidth="1.8" /></Svg>
        </div>
        <div className="flex-1 overflow-hidden text-[11px] text-[#f0f0f0]">
          {rows.map((r) => (
            <div key={r.label} className={`flex h-[22px] items-center whitespace-nowrap ${r.kind === "asm" ? "pl-[6px]" : "pl-[31px]"}`}>
              {r.kind === "asm" ? <Svg w={8} h={5} vb="0 0 8 5" className="mr-[12px]"><path d="M0 0h8L4 5Z" fill="#fff" /></Svg>
                : <Svg w={5} h={8} vb="0 0 5 8" className={`mr-[12px] ${r.kind === "cam" ? "invisible" : ""}`}><path d="M0 0v8l5-4Z" fill="#fff" /></Svg>}
              {r.kind === "asm" && <AsmIcon />}
              {r.kind === "part" && <PartIcon />}
              {r.kind === "cam" && <Svg><path d="M2 13 7 9l2-2 2 .5 5-5.5 2.5 2-3.5 7-2 .5L11.5 14 7 18c-3 0-5.5-2-5-5Z" fill="#ddd" stroke="#888" /><path d="m4 12 4 4.5M9 7.5l4 4" stroke="#777" /></Svg>}
              {r.kind === "light" && <Svg><path d="M2 5V2.5h6L9 5h8.5v13H2Z" fill="#e9eef0" stroke="#888" /><path d="M10 6.5v10M5 11.5h10M6.5 8l7 7M13.5 8l-7 7" stroke="#222" /><circle cx="10" cy="11.5" r="2.6" fill="#a9d5e8" stroke="#222" /></Svg>}
              <span className={`pt-[2px] ${labelGap[r.kind]}`}>{r.label}</span>
            </div>
          ))}
          <div className="flex h-[22px] items-center whitespace-nowrap pl-[48px]">
            <Svg><path d="M6 2c-6 0-6 10 0 10M6 2c4 0 4 5 2 7M14 2c-6 0-6 10 0 10M14 2c4 0 4 5 2 7" stroke="#5da5c8" strokeWidth="2.5" /></Svg>
            <span className="ml-[4px] pt-px">Mates</span>
          </div>
        </div>
      </div>
      <div className="h-[17px] bg-[#cbcbcb]" />
    </div>
  );
}

const SEC = 44.45;
function Timeline() {
  const ticks = Array.from({ length: 98 }, (_, i) => i);
  return (
    <div className="flex flex-1 flex-col">
      <svg width="1042" height="236" viewBox="238 392 1042 236" className="block shrink-0" fill="none">
        <defs><pattern id="hatch" width="10" height="10" patternUnits="userSpaceOnUse"><path d="M-1 11 11-1M-2 2 2-2M8 12l4-4" stroke="#b4b45e" strokeWidth=".7" /></pattern></defs>
        <path d="M238 392h1042v30H238Z" fill="#cbcbcb" />
        <path d="M288 392h222v30H288Z" fill="#fdfd7c" /><path d="M288 392h222v30H288Z" fill="url(#hatch)" />
        {ticks.map((i) => <path key={i} d={`M${Math.floor(288 + (i * SEC) / 5) + 0.5} ${i % 10 === 0 ? 395 : i % 5 === 0 ? 409 : 413}V421`} stroke="#5b5b5b" />)}
        {Array.from({ length: 10 }, (_, i) => (
          <g key={i}>
            <path d={`M${Math.floor(288 + i * 2 * SEC) + 0.5} 423V628`} stroke="#b9b9b9" />
            <text x={290 + i * 2 * SEC} y="406" className="fill-[#5e5e5e] text-[11.5px] font-semibold">{i * 2} sec</text>
          </g>
        ))}
        <path d="M288 624.5h222v3.5H288Z" fill="#cfa945" />
        <path d="M368 392v236" stroke="#868686" strokeWidth="2" />
        <path d="M288 433.5h222" stroke="#fff" />
        {[0, 1, 2, 3, 4, 5, 6, 7, 8, 9].map((i) => {
          const y = 433.5 + i * 22;
          return <path key={i} d={`M288.2 ${y - 9}l4.8 9-4.8 9-4.8-9Z`} fill={i < 2 ? "#fff" : i === 2 || i === 9 ? "#8d8d8d" : "#0000ff"} stroke={i === 2 || i === 9 ? "#8d8d8d" : "#fff"} strokeWidth={i < 2 ? 1.2 : 0.8} />;
        })}
        <path d="m510 424.5 4.5 9-4.5 9-4.5-9Z" fill="#fff" stroke="#fff" />
      </svg>
      <div className="flex h-[17px] items-center bg-[#cdcdcd]">
        <div className="flex h-full w-[17px] items-center justify-center bg-[#f0f0f0]"><Svg w={6} h={9} vb="0 0 6 9"><path d="M5 1 1.5 4.5 5 8" stroke="#555" strokeWidth="1.8" /></Svg></div>
      </div>
    </div>
  );
}

const sheetTabs: [string, string][] = [["Model", "w-[57px]"], ["3D Views", "w-[68px]"], ["Motion Study 1", "w-[101px]"], ["Motion Study 2", "w-[108px]"]];
const SheetTabs = () => (
  <div className="flex h-[17px] shrink-0 border-t border-[#7d7d7d] bg-[#474747] pl-px text-[11.5px] text-[#f2f2f2]">
    <div className="flex w-[64px]">
      {["M4 3v8M11 3 6 7l5 4Z", "M10 3 5 7l5 4Z", "m5 3 5 4-5 4Z", "m4 3 5 4-5 4ZM11 3v8"].map((d) => (
        <div key={d} className="flex w-[16px] items-center justify-center border border-[#b0b0b0] bg-[#a3a3a3]"><Svg w={14} h={14} vb="0 0 14 14"><path d={d} fill="#8b8b8b" stroke="#858585" /></Svg></div>
      ))}
    </div>
    {sheetTabs.map(([t, w], i) => (
      <div key={t} className={`${w} flex items-center whitespace-nowrap border-r border-[#8b8b8b] pb-[2px] leading-[14px] ${i === 3 ? "justify-start pl-[6px] font-bold tracking-[-0.1px]" : "justify-center bg-[#2c2c2c]"} ${i === 0 ? "pl-[6px]" : ""}`}>{t}</div>
    ))}
  </div>
);

/* ---------- task pane ---------- */
const paneItems: { t: string; n: React.ReactNode }[] = [
  { t: "Property Tab Builder", n: <SwIcon /> },
  { t: "SOLIDWORKS Rx", n: <SwIcon rx /> },
  { t: "Performance Benchmark Test", n: <SwIcon rx /> },
  { t: "Compare My Score", n: <Svg><rect x="1" y="1" width="17" height="17" rx="2" fill="#3f88ad" stroke="#a5cfe0" /><path d="M4 8.5c1-4 7-5 10-1l-4 0M15 10.5c-1 4-7 5-10 1l4 0" stroke="#fff" strokeWidth="2" /></Svg> },
  { t: "Copy Settings Wizard", n: <Svg><path d="M2 2h14" stroke="#ccc" strokeWidth="3" strokeDasharray="2 1" /><path d="M7 3v8M7 4l8 7" stroke="#eee" strokeWidth="2" /><path d="M1 9h7v10H1Z" fill="#58a5c9" /><path d="M9 10h10v9H9Z" fill="#c9151c" /></Svg> },
];
function TaskPane() {
  return (
    <aside className="absolute left-[1150px] top-[174px] z-20 flex h-[506px] w-[130px] flex-col overflow-hidden">
      <div className="flex h-[24px] w-[131px] shrink-0 border-l-2 border-t border-[#8a8a8a] bg-[#8a8a8a]">
        <div className="flex w-[25px] items-center justify-center bg-[#303030]"><Svg><circle cx="10" cy="10" r="9" fill="#115c87" stroke="#0a3550" /><path d="M5 5.5c3-3 7-3 10 0" stroke="#4a9cc2" strokeWidth="1.6" /><circle cx="10" cy="10" r="2.6" fill="#1c6f9b" stroke="#6fb3d0" /><path d="M3 10h1.5M15.5 10H17M9 16h2.5" stroke="#d5e3ea" strokeWidth="1.6" /></Svg></div>
        <div className="ml-px flex w-[27px] items-center justify-center bg-[#abadb2]"><HouseIcon /></div>
        <div className="flex w-[26px] items-center justify-center bg-[#303030]"><Svg><path d="M3 5 6 2l2 1v12l-3 3-2-1ZM7 5l3-3 2 1v12l-2 3-2-1ZM12 5l3-3 2 1v12l-3 3-2-1Z" fill="#f2f2f2" stroke="#666" strokeWidth=".8" /><path d="M5 6v11M9.5 6v11M14 6v11" stroke="#777" /></Svg></div>
        <div className="ml-px flex w-[26px] items-center justify-center bg-[#303030]"><Svg><path d="M2 17V3h5l2 2h7v3" fill="#aaa" stroke="#ddd" /><path d="M2 17 7 8h12l-4 9Z" fill="#f3f3f3" stroke="#999" /></Svg></div>
        <div className="ml-px flex w-[26px] items-center bg-[#303030] pl-[2px]"><Svg><rect x="1" y="2" width="20" height="16" rx="2" fill="#222" stroke="#ddd" strokeWidth="1.5" /><path d="M3.5 4.5h8v3h-8ZM14 4.5h3v3h-3ZM6 9.5h3v3h3.5v3h-9v-3H6Z" fill="#f4c534" /><path d="M14.5 11h6v6h-6Z" fill="#777" /></Svg></div>
      </div>
      <div className="flex flex-1 flex-col border-l-[3px] border-t border-[#a5a5a5] bg-[#474747]">
        <div className="flex h-[25px] shrink-0 items-center whitespace-nowrap border-b border-[#222] bg-[#acadb2] pl-[20px] text-[11.5px] font-semibold tracking-[0.1px] text-[#f2f2f2]">SOLIDWORKS Resources</div>
        <div className="mt-[31px] flex h-[20px] items-center pl-[13px] text-[11px] text-white"><HouseIcon /><span className="ml-[4px] whitespace-nowrap">Welcome to SOLIDWORKS</span></div>
        <div className="ml-[13px] mt-[24px] h-px shrink-0 bg-[#888]" />
        <div className="mt-[3px] h-[18px] shrink-0 whitespace-nowrap pl-[16px] text-[11px] font-bold leading-[18px] text-white">SOLIDWORKS Tools</div>
        <div className="mt-[1px] flex flex-col pl-[15px] text-[11px] text-white">
          {paneItems.map((p) => <div key={p.t} className="flex h-[28px] items-center whitespace-nowrap"><div className="-mt-px">{p.n}</div><span className="ml-[4px] mt-[5px]">{p.t}</span></div>)}
        </div>
        <div className="mt-[52px] h-px shrink-0 bg-[#888]" />
        <div className="flex flex-1 flex-col items-end text-[11px] text-[#e5e5e5]">
          <span className="-mr-[2px] mt-[29px] leading-[18px]">M</span>
          <span className="-mr-px mt-[10px] leading-[18px]">ns</span>
          <div className="mt-[26px] h-px w-full shrink-0 bg-[#888]" />
          <span className="mt-[4px] font-bold leading-[18px]">es</span>
          <span className="-mr-[2px] mt-[8px] leading-[18px]">rv</span>
        </div>
        <div className="flex h-[15px] shrink-0 justify-end border-t-2 border-[#c2c2c2] bg-[#939393]"><Svg w={7} h={10} vb="0 0 7 10" className="mt-[2px]"><path d="M0 9 6 1M2 9l4-5" stroke="#eee" /></Svg></div>
      </div>
    </aside>
  );
}

/* ---------- graph window ---------- */
function GraphWindow() {
  const x = (v: number) => Math.round(882 + v * 74.2) + 0.5;
  const y = (v: number) => Math.round(659 - v * 0.735) + 0.5;
  const xs = Array.from({ length: 11 }, (_, i) => i / 2);
  const ys = [0, 50, 100, 150, 200];
  return (
    <div className="absolute left-[808px] top-[451px] z-30 flex h-[261px] w-[464px] flex-col bg-white shadow-[0_2px_8px_rgba(0,0,0,0.45)]">
      <div className="flex h-[30px] shrink-0 items-center justify-between pl-[8px] pr-[1px] text-[11.3px] text-[#989898]">
        <span>Displacement .vs. Time</span>
        <span className="mt-[3px] flex h-[19px] w-[19px] items-center justify-center bg-[#e5e5e5] pb-[2px] text-[10px] font-bold text-[#f8f8f8]">x</span>
      </div>
      <div className="flex-1 border border-black">
        <svg width="462" height="229" viewBox="809 482 462 229" fill="none" className="block font-['Liberation_Sans',sans-serif]">
          <g stroke="#b0b0b0" strokeDasharray="1 1">
            {xs.slice(1, 10).map((v) => <path key={v} d={`M${x(v)} 513V659`} />)}
            {ys.slice(1, 4).map((v) => <path key={v} d={`M883 ${y(v)}H1253`} />)}
          </g>
          <path d={`M${x(0)} ${y(200)}H${x(5)}V${y(0)}H${x(0)}Z`} stroke="#000" />
          <g stroke="#000">
            {xs.map((v) => <path key={v} d={`M${x(v)} 656V664`} />)}
            {xs.slice(0, 10).map((v) => <path key={v} d={`M${x(v + 0.25)} 657V662`} />)}
            {ys.map((v) => <path key={v} d={`M877 ${y(v)}H885`} />)}
            {ys.slice(0, 4).map((v) => <path key={v} d={`M880 ${y(v + 25)}H884`} />)}
          </g>
          <path d="M882 585.5h372" stroke="#0062bd" strokeWidth="3" />
          <g className="fill-black text-[10.7px]">
            {ys.map((v) => <text key={v} x="870" y={y(v) + 3.5} textAnchor="end">{v.toFixed(2)}</text>)}
            {xs.map((v) => <text key={v} x={x(v) - 1} y="682" textAnchor="middle">{v.toFixed(1)}</text>)}
            <text x="1066.5" y="696" textAnchor="middle" className="text-[11px]">Time (s)</text>
            <text transform="translate(831 586.5) rotate(-90)" textAnchor="middle" className="text-[12.4px]">Displacement (RPM)</text>
          </g>
        </svg>
      </div>
    </div>
  );
}

/* ---------- taskbar ---------- */
const apps: { n: React.ReactNode; on?: boolean }[] = [
  { n: <Svg w={24} h={24} vb="0 0 24 24"><circle cx="12" cy="12" r="12" fill="#dd3a2e" /><path d="M1.6 6A12 12 0 0 0 12 24l5.2-9H12L6.8 15Z" fill="#1f9d55" /><path d="M12 24A12 12 0 0 0 22.4 6H12l5.2 9Z" fill="#fcc934" /><circle cx="12" cy="12" r="5.8" fill="#fff" /><circle cx="12" cy="12" r="4.5" fill="#2a7be8" /></Svg> },
  { n: <Svg w={22} h={20} vb="0 0 22 20"><path d="M0 1.5C0 .5.5 0 1.5 0H8l2 2h11v6H0Z" fill="#e0a017" /><path d="M0 3h22v15H0Z" fill="#fcd462" /><path d="M4 18v-5.5c0-1 .5-1.5 1.5-1.5h11c1 0 1.5.5 1.5 1.5V18h-4v-3H8v3Z" fill="#3b8fd0" /></Svg> },
  { n: <Svg w={26} h={26} vb="0 0 26 26"><circle cx="13" cy="13" r="12" fill="#5865f2" /><path d="M5 16c0-5 2-8 3-8l2 .5h4l2-.5c1 0 3.5 3 3.5 8L16 18l-1-1.5h-5L9 18Z" fill="#fff" /><circle cx="10" cy="13" r="1.6" fill="#5865f2" /><circle cx="15" cy="13" r="1.6" fill="#5865f2" /><circle cx="19" cy="19" r="7" fill="#ed4e55" /><text x="19" y="22.5" textAnchor="middle" className="fill-white font-['Liberation_Sans'] text-[10px]">9+</text></Svg> },
  { n: <Svg w={24} h={24} vb="0 0 24 24"><path d="M3 1h13l7 7v15H8l-5-5Z" fill="#00c4e6" /><path d="M1 0h15l-4 4H6v7L1 5Z" fill="#00424f" /><path d="M4 3h8v4H8v10H6l-2-3Z" fill="#eafcff" /><path d="M7 11h7V7.5l6 5.5-6 5.5V15H7Z" fill="#fff" /></Svg> },
  { n: <Svg w={22} h={22} vb="0 0 22 22"><path d="M0 0h22v22H0Z" fill="#2aa5ea" /><path d="M0 15 7 8l14 14H0Z" fill="#17498d" /><path d="m11 14 4-3 7 6v5h-3Z" fill="#2370be" /><circle cx="15.5" cy="5" r="2" fill="#e2f5ff" /></Svg> },
  { n: <Svg w={26} h={26} vb="0 0 26 26"><path d="M1 5 11 1l13 2.5V18L13 22 1 18Z" fill="#c9141a" /><path d="m1 5 12 2 11-3.5L11 1Z" fill="#ef3b3e" /><path d="M13 7 24 3.5V18l-11 4Z" fill="#8f0d12" /><text x="3" y="16.5" className="fill-white font-['Lato'] text-[12px] font-bold">S</text><text x="12" y="15.5" className="fill-white font-['Lato'] text-[12px] font-bold">W</text><text x="15.5" y="25" textAnchor="middle" className="fill-white stroke-black stroke-2 font-['Liberation_Sans'] text-[9px] font-bold [paint-order:stroke]">2022</text></Svg>, on: true },
];
const Taskbar = () => (
  <footer className="flex h-[40px] shrink-0 bg-[radial-gradient(ellipse_at_540px_0,#4a4a4a_0,#2f2f30_35%,#242527_70%)] pl-[16px]">
    <div className="mr-[34px] flex w-[16px] items-center"><Svg w={16} h={16} vb="0 0 16 16"><path d="M0 2.3 6.5 1.4V7.5H0ZM7.5 1.2 16 0v7.5H7.5ZM0 8.5h6.5v6.1L0 13.7ZM7.5 8.5H16V16l-8.5-1.2Z" fill="#fff" /></Svg></div>
    <div className="-ml-[16px] flex w-[1000px]">
      {apps.map((a, i) => (
        <div key={i} className={`flex flex-col items-center ${a.on ? "ml-px w-[48px] bg-[#595959]" : "w-[49px]"}`}>
          <div className="flex flex-1 items-center">{a.n}</div>
          <div className={`h-[2px] bg-[#fbd67c] ${a.on ? "w-full" : "w-[40px]"}`} />
        </div>
      ))}
    </div>
    <div className="flex flex-1 items-end justify-end pb-[3px] pr-[59px] text-[11px] leading-[15px] text-white">16/12/2022</div>
  </footer>
);

export default function App() {
  return (
    <div className={`relative flex h-[720px] w-[1280px] flex-col overflow-hidden bg-[#474747] ${FONT}`}>
      <TitleBar />
      <Ribbon />
      <main className="relative flex h-[247px] shrink-0 flex-col overflow-hidden bg-[radial-gradient(ellipse_600px_125px_at_400px_20px,#ffffff_0,#ffffff_45%,#ffffff00_100%),linear-gradient(to_bottom,#eceef4_0,#dfe2ec_25%,#d9dce8_48%,#dee0ea_57%,#f6f7f9_67%,#ffffff_76%,#f3f4f9_100%)]">
        <Model />
        <div className="relative flex"><CommandTabs /><WindowButtons /></div>
        <div className="relative flex h-[225px]">
          <MotorPanel />
          <div className="absolute left-[229px] top-[82px] z-20 flex h-[39px] w-[9px] items-center border border-l-0 border-[#8a8a8a] bg-[#474747]"><Dot /></div>
          <Viewport />
        </div>
      </main>
      <section className="flex h-[298px] shrink-0 flex-col border-l-2 border-[#8ea3a6]">
        <div className="-ml-[2px]"><MotionToolbar /></div>
        <div className="flex h-[253px] shrink-0 pl-px">
          <Tree />
          <div className="ml-px w-[3px] border-x border-[#2b2b52] bg-white" />
          <div className="w-px bg-[#474747]" />
          <Timeline />
        </div>
        <SheetTabs />
      </section>
      <div className="flex h-[18px] shrink-0 items-center bg-[#939393] pl-[1px] pt-px text-[11.5px] text-[#ececec]">shaft&lt;2&gt;</div>
      <Taskbar />
      <TaskPane />
      <GraphWindow />
    </div>
  );
}
